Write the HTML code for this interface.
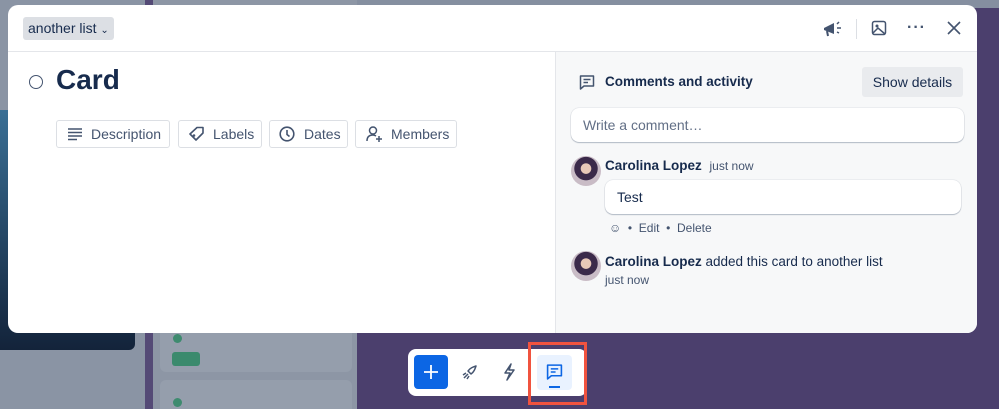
<!DOCTYPE html>
<html style="width:999px;height:409px;overflow:hidden"><head><style>
*{box-sizing:border-box;margin:0;padding:0}
body{width:999px;height:409px;overflow:hidden;background:#4b3f6d;font-family:"Liberation Sans",sans-serif;position:relative;color:#172b4d}
.abs{position:absolute}
</style></head><body>
<div class="abs" style="left:0;top:0;width:999px;height:8px;background:#858fa0"></div>
<div class="abs" style="left:0;top:0;width:145px;height:409px;background:#8a94a4"></div>
<div class="abs" style="left:0;top:110px;width:135px;height:240px;background:linear-gradient(#3a6f95,#13233a);border-radius:0 0 6px 0"></div>
<div class="abs" style="left:145px;top:0;width:8px;height:409px;background:#544a76"></div>
<div class="abs" style="left:153px;top:0;width:204px;height:409px;background:#8d96a5"></div>
<div class="abs" style="left:160px;top:320px;width:192px;height:52px;background:#959eac;border-radius:6px"></div>
<div class="abs" style="left:173px;top:334px;width:9px;height:9px;background:#3e8b6f;border-radius:50%"></div>
<div class="abs" style="left:172px;top:352px;width:28px;height:14px;background:#3b8a6d;border-radius:3px"></div>
<div class="abs" style="left:160px;top:380px;width:192px;height:29px;background:#959eac;border-radius:6px 6px 0 0"></div>
<div class="abs" style="left:173px;top:398px;width:9px;height:9px;background:#3e8b6f;border-radius:50%"></div>

<div class="abs" style="left:8px;top:5px;width:969px;height:328px;background:#fff;border-radius:10px;overflow:hidden">
  <div class="abs" style="left:0;top:46px;width:969px;height:1px;background:#e4e6ea"></div>
  <div class="abs" style="left:15px;top:12px;height:23px;padding:0 5px;background:#dcdfe4;border-radius:3px;font-size:14px;line-height:23px;color:#172b4d">another list <span style="font-size:10px">&#8964;</span></div>
  <svg class="abs" style="left:813px;top:14px" width="22" height="20" viewBox="0 0 22 20"><path d="M3 9 L13 4 L13 15 L3 11 Z" fill="#44546f"/><path d="M6 12 L7 17" stroke="#44546f" stroke-width="2"/><path d="M16 5 L18 3 M16 9 L20 9 M16 13 L18 14" stroke="#44546f" stroke-width="1.5"/></svg>
  <div class="abs" style="left:848px;top:14px;width:1px;height:20px;background:#dcdfe4"></div>
  <svg class="abs" style="left:863px;top:15px" width="16" height="16" viewBox="0 0 16 16"><rect x="1.5" y="1.5" width="13" height="13" rx="2" fill="none" stroke="#44546f" stroke-width="1.5"/><circle cx="6" cy="6" r="1.5" fill="#44546f"/><path d="M2 13 L7 8 L14 14" fill="none" stroke="#44546f" stroke-width="1.5"/></svg>
  <div class="abs" style="left:899px;top:14px;font-size:16px;color:#44546f;letter-spacing:1px;font-weight:bold">···</div>
  <svg class="abs" style="left:939px;top:16px" width="14" height="14" viewBox="0 0 14 14"><path d="M1 1 L13 13 M13 1 L1 13" stroke="#44546f" stroke-width="1.6"/></svg>

  <div class="abs" style="left:21px;top:70px;width:14px;height:14px;border:1.6px solid #44546f;border-radius:50%"></div>
  <div class="abs" style="left:48px;top:59px;font-size:28px;font-weight:bold;color:#172b4d">Card</div>

  <div class="abs" style="left:48px;top:115px;width:114px;height:28px;border:1px solid #dcdfe4;border-radius:3px;font-size:14px;color:#44546f;line-height:26px;padding-left:34px">Description</div>
  <svg class="abs" style="left:59px;top:121px" width="16" height="16" viewBox="0 0 16 16"><path d="M1 3H15M1 6.5H15M1 10H15M1 13.5H10" stroke="#44546f" stroke-width="1.5"/></svg>
  <div class="abs" style="left:170px;top:115px;width:84px;height:28px;border:1px solid #dcdfe4;border-radius:3px;font-size:14px;color:#44546f;line-height:26px;padding-left:34px">Labels</div>
  <svg class="abs" style="left:180px;top:121px" width="17" height="16" viewBox="0 0 17 16"><path d="M2 8 L9 1.5 L15 1.5 L15 7 L8 14 Z" fill="none" stroke="#44546f" stroke-width="1.6" stroke-linejoin="round"/><circle cx="6" cy="9.5" r="1.3" fill="#44546f"/></svg>
  <div class="abs" style="left:261px;top:115px;width:79px;height:28px;border:1px solid #dcdfe4;border-radius:3px;font-size:14px;color:#44546f;line-height:26px;padding-left:34px">Dates</div>
  <svg class="abs" style="left:271px;top:121px" width="16" height="16" viewBox="0 0 16 16"><circle cx="8" cy="8" r="6.8" fill="none" stroke="#44546f" stroke-width="1.6"/><path d="M8 4 V8.5 L10.5 10.5" fill="none" stroke="#44546f" stroke-width="1.6"/></svg>
  <div class="abs" style="left:347px;top:115px;width:102px;height:28px;border:1px solid #dcdfe4;border-radius:3px;font-size:14px;color:#44546f;line-height:26px;padding-left:35px">Members</div>
  <svg class="abs" style="left:357px;top:120px" width="18" height="18" viewBox="0 0 18 18"><circle cx="8" cy="5.5" r="3.5" fill="none" stroke="#44546f" stroke-width="1.5"/><path d="M2 16 C2 11 5 10 8 10 C9 10 10 10.3 11 11" fill="none" stroke="#44546f" stroke-width="1.5"/><path d="M14 11 V17 M11 14 H17" stroke="#44546f" stroke-width="1.5"/></svg>

  <div class="abs" style="left:547px;top:47px;width:422px;height:281px;background:#f7f8f9;border-left:1px solid #e4e6ea"></div>
  <svg class="abs" style="left:571px;top:69px" width="16" height="16" viewBox="0 0 16 16"><path d="M1.5 2 H14.5 V12 H5 L1.5 15 Z" fill="none" stroke="#44546f" stroke-width="1.5" stroke-linejoin="round"/><path d="M4.5 5.5H11.5M4.5 8.5H9" stroke="#44546f" stroke-width="1.4"/></svg>
  <div class="abs" style="left:597px;top:69px;font-size:13.5px;font-weight:bold;color:#172b4d">Comments and activity</div>
  <div class="abs" style="left:854px;top:62px;width:101px;height:30px;background:#e9ebee;border-radius:3px;font-size:14px;color:#172b4d;line-height:30px;text-align:center">Show details</div>
  <div class="abs" style="left:563px;top:103px;width:393px;height:34px;background:#fff;border-radius:8px;box-shadow:0 1px 1px rgba(9,30,66,.25),0 0 1px rgba(9,30,66,.31);font-size:14px;color:#626f86;line-height:34px;padding-left:12px">Write a comment…</div>

  <div class="abs" style="left:563px;top:151px;width:30px;height:30px;border-radius:50%;background:radial-gradient(circle at 50% 42%,#e8c8b8 0 22%,#3b2a4a 24% 50%,#c9bcc6 52%)"></div>
  <div class="abs" style="left:597px;top:153px;font-size:13.5px;font-weight:bold;color:#172b4d">Carolina Lopez <span style="font-weight:normal;font-size:12px;color:#44546f;margin-left:4px">just now</span></div>
  <div class="abs" style="left:597px;top:175px;width:356px;height:34px;background:#fff;border-radius:8px;box-shadow:0 1px 1px rgba(9,30,66,.25),0 0 1px rgba(9,30,66,.31);font-size:14px;line-height:34px;padding-left:12px;color:#172b4d">Test</div>
  <div class="abs" style="left:601px;top:216px;font-size:12px;color:#44546f">☺ &nbsp;•&nbsp; Edit &nbsp;•&nbsp; Delete</div>

  <div class="abs" style="left:563px;top:246px;width:30px;height:30px;border-radius:50%;background:radial-gradient(circle at 50% 42%,#e8c8b8 0 22%,#3b2a4a 24% 50%,#c9bcc6 52%)"></div>
  <div class="abs" style="left:597px;top:249px;font-size:13.5px;color:#172b4d"><b>Carolina Lopez</b> added this card to another list</div>
  <div class="abs" style="left:597px;top:268px;font-size:12px;color:#44546f">just now</div>
</div>

<div class="abs" style="left:408px;top:349px;width:179px;height:47px;background:#fff;border-radius:8px"></div>
<div class="abs" style="left:414px;top:355px;width:34px;height:34px;background:#0c66e4;border-radius:4px"></div>
<svg class="abs" style="left:422px;top:363px" width="18" height="18" viewBox="0 0 18 18"><path d="M9 2V16M2 9H16" stroke="#fff" stroke-width="1.8"/></svg>
<svg class="abs" style="left:460px;top:364px" width="18" height="18" viewBox="0 0 18 18"><path d="M4 14 L8 10 M3 11 L6 9 M7 15 L9 12 M8 7 C10 4 13 3 16 2 C15 5 14 8 11 10 L8 7 Z" fill="none" stroke="#44546f" stroke-width="1.5" stroke-linejoin="round"/></svg>
<svg class="abs" style="left:502px;top:363px" width="14" height="18" viewBox="0 0 14 18"><path d="M9 1 L3 10 H8 L5 17 L12 7 H7 Z" fill="none" stroke="#44546f" stroke-width="1.5" stroke-linejoin="round"/></svg>
<div class="abs" style="left:537px;top:355px;width:35px;height:35px;background:#e9f2ff;border-radius:4px"></div>
<svg class="abs" style="left:546px;top:363px" width="17" height="17" viewBox="0 0 16 16"><path d="M1.5 2 H14.5 V12 H5 L1.5 15 Z" fill="none" stroke="#0c66e4" stroke-width="1.5" stroke-linejoin="round"/><path d="M4.5 5.5H11.5M4.5 8.5H9" stroke="#0c66e4" stroke-width="1.4"/></svg>
<div class="abs" style="left:549px;top:386px;width:11px;height:2px;background:#0c66e4"></div>
<div class="abs" style="left:528px;top:342px;width:59px;height:63px;border:3px solid #f0533f"></div>
</body></html>
